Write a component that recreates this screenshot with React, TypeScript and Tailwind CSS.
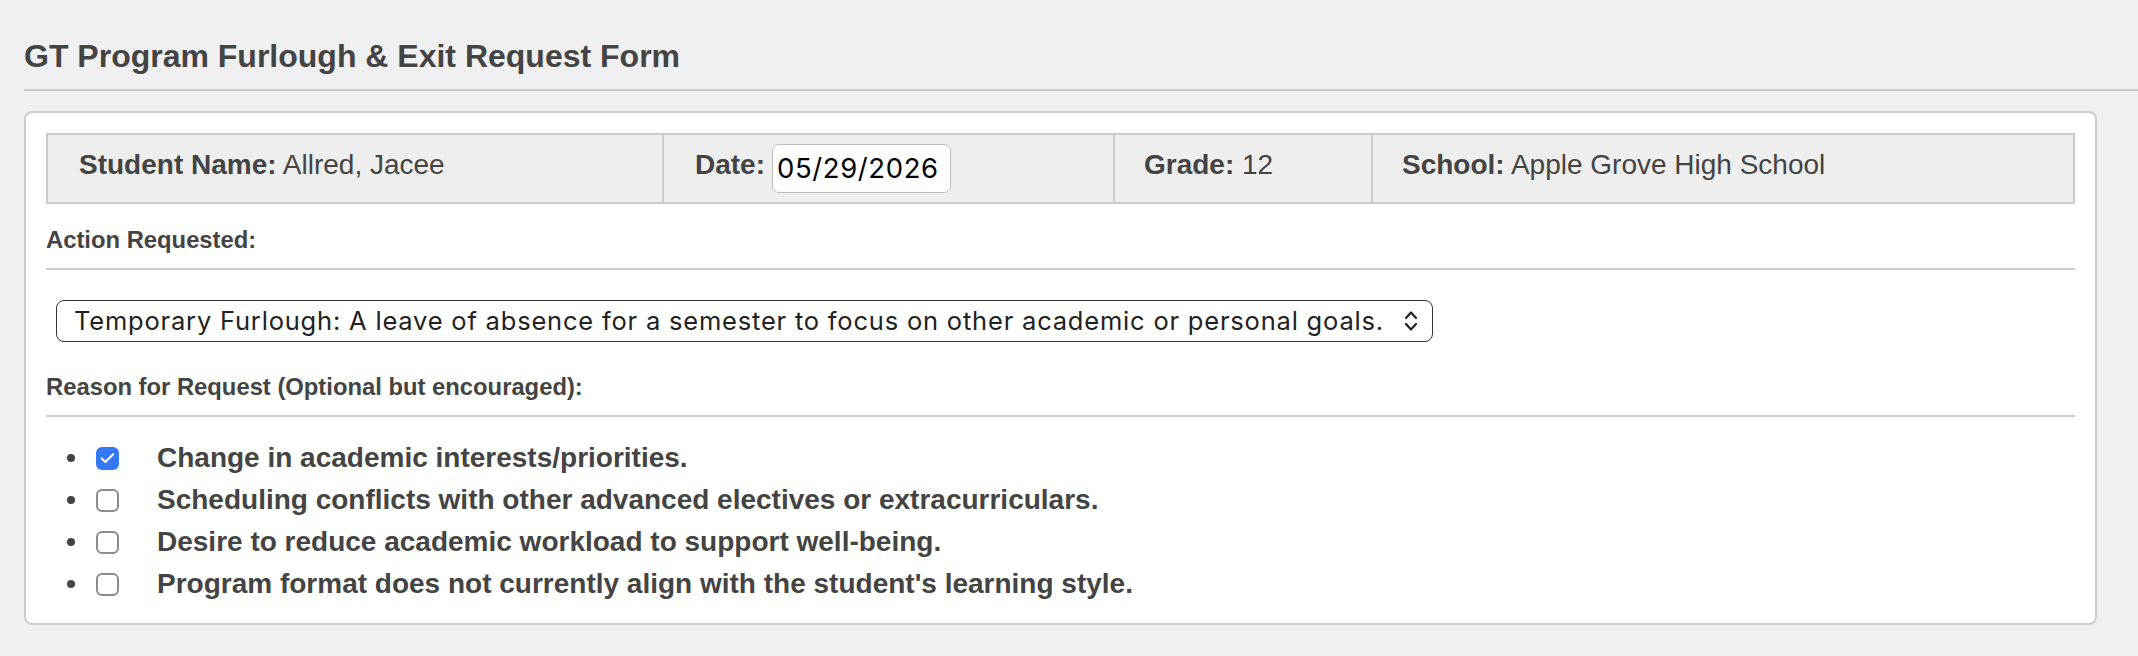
import { Check } from 'lucide-react';

const reasons = [
  { label: 'Change in academic interests/priorities.', checked: true },
  { label: 'Scheduling conflicts with other advanced electives or extracurriculars.', checked: false },
  { label: 'Desire to reduce academic workload to support well-being.', checked: false },
  { label: "Program format does not currently align with the student's learning style.", checked: false },
];

function Checkbox({ checked }: { checked: boolean }) {
  if (checked) {
    return (
      <span className="flex h-[23px] w-[23px] items-center justify-center rounded-[6px] bg-[#3478f6]">
        <Check className="h-[17px] w-[17px] text-white" strokeWidth={3} />
      </span>
    );
  }
  return <span className="block h-[23px] w-[23px] rounded-[6px] border-2 border-[#8c8c8c] bg-white" />;
}

export default function App() {
  return (
    <div className="min-h-[656px] bg-[#f0f0f2] pt-[37px] font-['Liberation_Sans',Arial,sans-serif] text-[#444]">
      <div className="pl-[24px]">
        <h1 className="text-[32px] font-bold leading-[38px]">GT Program Furlough &amp; Exit Request Form</h1>
        <div className="mt-[14px] h-[2px] bg-[#cccccc]" />
      </div>

      <div className="ml-[24px] mr-[41px] mt-[20px] rounded-[8px] border-2 border-[#cccccc] bg-white p-[20px] pb-[18px]">
        <div className="grid h-[71px] grid-cols-[614px_451px_258px_1fr] border-2 border-[#cccccc] bg-[#eeeeee] text-[28px]">
          <div className="flex items-center pl-[31px]">
            <span className="mb-[8px]">
              <b>Student Name:</b> Allred, Jacee
            </span>
          </div>
          <div className="flex items-center border-l-2 border-[#cccccc] pl-[31px]">
            <span className="mb-[8px] font-bold">Date:</span>
            <span className="ml-[7px] flex h-[49px] w-[179px] items-center rounded-[7px] border border-[#bbbbbb] bg-white pl-[4px] font-['Inter',sans-serif] text-[27.5px] tracking-[0.6px] text-black">
              05/29/2026
            </span>
          </div>
          <div className="flex items-center border-l-2 border-[#cccccc] pl-[29px]">
            <span className="mb-[8px]">
              <b>Grade:</b> 12
            </span>
          </div>
          <div className="flex items-center border-l-2 border-[#cccccc] pl-[29px]">
            <span className="mb-[8px]">
              <b>School:</b> Apple Grove High School
            </span>
          </div>
        </div>

        <div className="mt-[22px] text-[23.8px] font-bold leading-[27px]">Action Requested:</div>
        <div className="mt-[15px] h-[2px] bg-[#cccccc]" />

        <div className="ml-[10px] mt-[30px] flex h-[42px] w-[1377px] items-center justify-between rounded-[8px] border-[1.5px] border-[#333] pl-[17px] pr-[14px] font-['Inter',sans-serif] text-[25.5px] tracking-[0.8px] text-[#222]">
          <span>Temporary Furlough: A leave of absence for a semester to focus on other academic or personal goals.</span>
          <svg width="14" height="22" viewBox="0 0 14 22" fill="none" stroke="#222" strokeWidth="2.2" strokeLinecap="round" strokeLinejoin="round">
            <path d="M2 8 L7 2.5 L12 8" />
            <path d="M2 14 L7 19.5 L12 14" />
          </svg>
        </div>

        <div className="mt-[31px] text-[23.8px] font-bold leading-[27px]">Reason for Request (Optional but encouraged):</div>
        <div className="mt-[15px] h-[2px] bg-[#cccccc]" />

        <ul className="mt-[20px]">
          {reasons.map((r) => (
            <li key={r.label} className="flex h-[42px] items-center">
              <span className="ml-[21px] h-[8px] w-[8px] rounded-full bg-[#444]" />
              <span className="ml-[21px]">
                <Checkbox checked={r.checked} />
              </span>
              <span className="ml-[38px] text-[28px] font-bold">{r.label}</span>
            </li>
          ))}
        </ul>
      </div>
    </div>
  );
}
